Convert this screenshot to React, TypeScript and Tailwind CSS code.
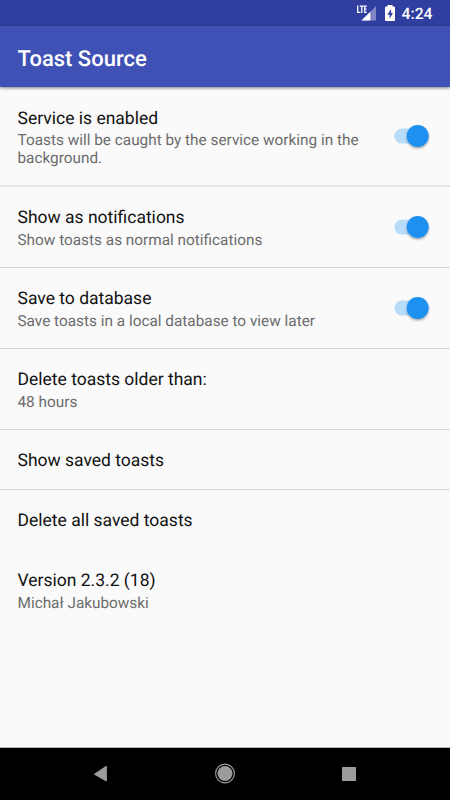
import React from "react";

function Switch() {
  return (
    <svg className="mr-[14px] shrink-0" width="48" height="32" viewBox="0 0 48 32">
      <defs>
        <filter id="thumbShadow" x="-30%" y="-30%" width="160%" height="160%">
          <feDropShadow dx="0" dy="1.3" stdDeviation="0.9" floodColor="#000" floodOpacity=".38" />
        </filter>
      </defs>
      <rect x="6.4" y="8.6" width="30" height="15" rx="7.5" fill="#b9dcf9" />
      <circle cx="29.7" cy="16" r="11" fill="#1f91f0" filter="url(#thumbShadow)" />
    </svg>
  );
}

type RowProps = { title: string; summary?: string; on?: boolean; className: string; textClass?: string };

function Row({ title, summary, on, className, textClass = "" }: RowProps) {
  return (
    <div className={`flex shrink-0 items-center ${className}`}>
      <div className={`flex-1 pl-[17.5px] ${textClass}`}>
        <div className="text-[17.5px] leading-[23px] text-[#111111]">{title}</div>
        {summary && <div className="mt-[0.5px] w-[360px] text-[15.35px] leading-[18px] text-[#6c6c6c]">{summary}</div>}
      </div>
      {on && <Switch />}
    </div>
  );
}

function StatusIcons() {
  return (
    <svg width="46" height="26" viewBox="354 0 46 26">
      <path d="M375 6V20.5H361Z" fill="#8088c5" />
      <path d="M369.3 11.8V20.5H360.4Z" fill="#fff" />
      <g fill="none" stroke="#fff" strokeWidth="1.3">
        <path d="M356.7 5.5V12.3H359.4M358.8 6.1H362.8M360.8 6.1V13M365.8 6.1H363.7V12.3H365.8M363.7 9.2H365.5" />
      </g>
      <path d="M386.5 5H391.5V6.5H393Q394 6.5 394 7.5V20Q394 21 393 21H385Q384 21 384 20V7.5Q384 6.5 385 6.5H386.5Z" fill="#fff" />
      <path d="M390.1 9L386.2 14.7H388.6V18.7L392 13H390.1Z" fill="#303f9f" />
    </svg>
  );
}

export default function App() {
  return (
    <div className="flex h-[800px] w-[450px] flex-col overflow-hidden bg-[#fafafa] font-[Roboto,sans-serif] [text-rendering:geometricPrecision]">
      <div className="flex h-[26px] shrink-0 items-center justify-end bg-[#303f9f] pr-[17.5px] text-white">
        <StatusIcons />
        <span className="w-[32px] pt-[2px] text-right text-[15.7px] font-medium leading-6">4:24</span>
      </div>
      <header className="relative flex h-[61px] shrink-0 items-center bg-[#3f51b5] pl-[17.5px] pt-[5px] text-[22px] font-medium text-white shadow-[0_1px_3px_rgba(0,0,0,0.5)]">
        Toast Source
      </header>
      <Row className="h-[100px] border-b-2 border-[#e4e4e4]" textClass="pt-[3px]" title="Service is enabled" summary="Toasts will be caught by the service working in the background." on />
      <Row className="h-[81px] border-b border-[#d5d5d5]" textClass="pt-[2px]" title="Show as notifications" summary="Show toasts as normal notifications" on />
      <Row className="h-[81px] border-b border-[#d5d5d5]" textClass="pt-[2px]" title="Save to database" summary="Save toasts in a local database to view later" on />
      <Row className="h-[81px] border-b border-[#d5d5d5]" textClass="pt-[2px]" title="Delete toasts older than:" summary="48 hours" />
      <Row className="h-[60px] border-b border-[#d5d5d5]" textClass="pt-[4px]" title="Show saved toasts" />
      <Row className="h-[60px]" textClass="pt-[3px]" title="Delete all saved toasts" />
      <Row className="h-[82px]" title="Version 2.3.2 (18)" summary="Michał Jakubowski" />
      <nav className="mt-auto h-[53px] shrink-0 border-t border-[#b4b4b4] bg-black">
        <svg width="450" height="52" viewBox="0 748 450 52" fill="#9c9c9c">
          <path d="M94 774L105.5 766.3Q106.9 765.7 106.9 767V780.5Q106.9 781.8 105.5 781L94 774.5Q93.6 774.2 94 774Z" />
          <circle cx="225" cy="773.5" r="7.5" />
          <circle cx="225" cy="773.5" r="9.4" fill="none" stroke="#9c9c9c" strokeWidth="1.2" />
          <rect x="342" y="767" width="14" height="14" rx=".6" />
        </svg>
      </nav>
    </div>
  );
}
